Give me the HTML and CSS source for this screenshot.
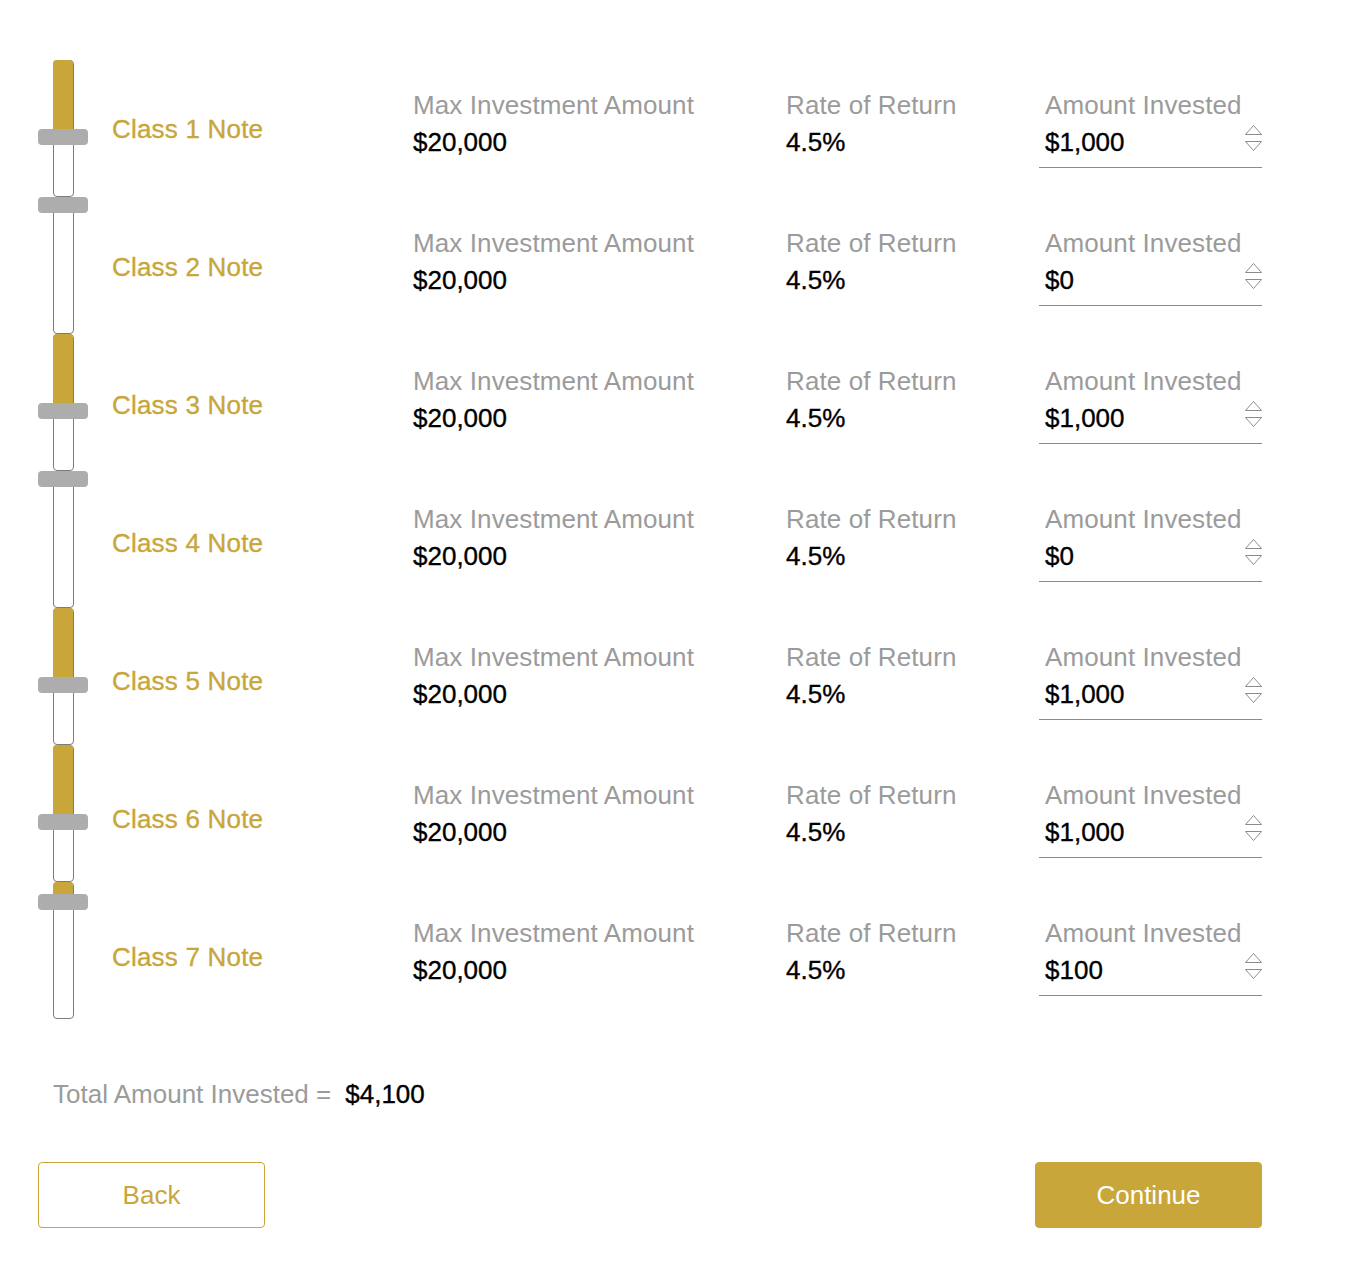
FILE: index.html
```html
<!DOCTYPE html>
<html>
<head>
<meta charset="utf-8">
<link rel="stylesheet" href="styles.css">
</head>
<body>
<div class="page">
  <div class="main">
    <div class="sliders">
      <div class="slider"><div class="track"></div><div class="fill" style="height:77px"></div><div class="thumb" style="top:69px"></div></div>
      <div class="slider"><div class="track"></div><div class="thumb" style="top:0px"></div></div>
      <div class="slider"><div class="track"></div><div class="fill" style="height:77px"></div><div class="thumb" style="top:69px"></div></div>
      <div class="slider"><div class="track"></div><div class="thumb" style="top:0px"></div></div>
      <div class="slider"><div class="track"></div><div class="fill" style="height:77px"></div><div class="thumb" style="top:69px"></div></div>
      <div class="slider"><div class="track"></div><div class="fill" style="height:77px"></div><div class="thumb" style="top:69px"></div></div>
      <div class="slider"><div class="track"></div><div class="fill" style="height:20px"></div><div class="thumb" style="top:12px"></div></div>
    </div>
    <div class="rows">
      <div class="row">
        <div class="name">Class 1 Note</div>
        <div class="col max"><div class="head">Max Investment Amount</div><div class="val">$20,000</div></div>
        <div class="col rate"><div class="head">Rate of Return</div><div class="val">4.5%</div></div>
        <div class="col amount"><div class="head">Amount Invested</div><div class="val input"><span>$1,000</span><svg class="spin" width="17" height="26" viewBox="0 0 17 26"><path d="M8.5 0.5 L0.5 9.5 L16.5 9.5 Z M0.5 16.5 L16.5 16.5 L8.5 25.5 Z" fill="none" stroke="#8c8c8c" stroke-width="1"/></svg></div></div>
      </div>
      <div class="row">
        <div class="name">Class 2 Note</div>
        <div class="col max"><div class="head">Max Investment Amount</div><div class="val">$20,000</div></div>
        <div class="col rate"><div class="head">Rate of Return</div><div class="val">4.5%</div></div>
        <div class="col amount"><div class="head">Amount Invested</div><div class="val input"><span>$0</span><svg class="spin" width="17" height="26" viewBox="0 0 17 26"><path d="M8.5 0.5 L0.5 9.5 L16.5 9.5 Z M0.5 16.5 L16.5 16.5 L8.5 25.5 Z" fill="none" stroke="#8c8c8c" stroke-width="1"/></svg></div></div>
      </div>
      <div class="row">
        <div class="name">Class 3 Note</div>
        <div class="col max"><div class="head">Max Investment Amount</div><div class="val">$20,000</div></div>
        <div class="col rate"><div class="head">Rate of Return</div><div class="val">4.5%</div></div>
        <div class="col amount"><div class="head">Amount Invested</div><div class="val input"><span>$1,000</span><svg class="spin" width="17" height="26" viewBox="0 0 17 26"><path d="M8.5 0.5 L0.5 9.5 L16.5 9.5 Z M0.5 16.5 L16.5 16.5 L8.5 25.5 Z" fill="none" stroke="#8c8c8c" stroke-width="1"/></svg></div></div>
      </div>
      <div class="row">
        <div class="name">Class 4 Note</div>
        <div class="col max"><div class="head">Max Investment Amount</div><div class="val">$20,000</div></div>
        <div class="col rate"><div class="head">Rate of Return</div><div class="val">4.5%</div></div>
        <div class="col amount"><div class="head">Amount Invested</div><div class="val input"><span>$0</span><svg class="spin" width="17" height="26" viewBox="0 0 17 26"><path d="M8.5 0.5 L0.5 9.5 L16.5 9.5 Z M0.5 16.5 L16.5 16.5 L8.5 25.5 Z" fill="none" stroke="#8c8c8c" stroke-width="1"/></svg></div></div>
      </div>
      <div class="row">
        <div class="name">Class 5 Note</div>
        <div class="col max"><div class="head">Max Investment Amount</div><div class="val">$20,000</div></div>
        <div class="col rate"><div class="head">Rate of Return</div><div class="val">4.5%</div></div>
        <div class="col amount"><div class="head">Amount Invested</div><div class="val input"><span>$1,000</span><svg class="spin" width="17" height="26" viewBox="0 0 17 26"><path d="M8.5 0.5 L0.5 9.5 L16.5 9.5 Z M0.5 16.5 L16.5 16.5 L8.5 25.5 Z" fill="none" stroke="#8c8c8c" stroke-width="1"/></svg></div></div>
      </div>
      <div class="row">
        <div class="name">Class 6 Note</div>
        <div class="col max"><div class="head">Max Investment Amount</div><div class="val">$20,000</div></div>
        <div class="col rate"><div class="head">Rate of Return</div><div class="val">4.5%</div></div>
        <div class="col amount"><div class="head">Amount Invested</div><div class="val input"><span>$1,000</span><svg class="spin" width="17" height="26" viewBox="0 0 17 26"><path d="M8.5 0.5 L0.5 9.5 L16.5 9.5 Z M0.5 16.5 L16.5 16.5 L8.5 25.5 Z" fill="none" stroke="#8c8c8c" stroke-width="1"/></svg></div></div>
      </div>
      <div class="row">
        <div class="name">Class 7 Note</div>
        <div class="col max"><div class="head">Max Investment Amount</div><div class="val">$20,000</div></div>
        <div class="col rate"><div class="head">Rate of Return</div><div class="val">4.5%</div></div>
        <div class="col amount"><div class="head">Amount Invested</div><div class="val input"><span>$100</span><svg class="spin" width="17" height="26" viewBox="0 0 17 26"><path d="M8.5 0.5 L0.5 9.5 L16.5 9.5 Z M0.5 16.5 L16.5 16.5 L8.5 25.5 Z" fill="none" stroke="#8c8c8c" stroke-width="1"/></svg></div></div>
      </div>
    </div>
  </div>
  <div class="total"><span class="total-label">Total Amount Invested =</span><span class="total-val">$4,100</span></div>
  <div class="actions">
    <button class="btn back">Back</button>
    <button class="btn continue">Continue</button>
  </div>
</div>
</body>
</html>
```

FILE: styles.css
```css
* { box-sizing: border-box; }
html, body { margin: 0; padding: 0; background: #fff; }
body {
  font-family: "Liberation Sans", Arial, Helvetica, sans-serif;
  font-size: 26px;
  color: #000;
}
.page {
  padding: 60px 0 0 38px;
  width: 1262px;
}
.main {
  display: flex;
  align-items: flex-start;
}
.sliders {
  width: 50px;
  display: flex;
  flex-direction: column;
}
.slider {
  position: relative;
  height: 137px;
  width: 50px;
}
.track {
  margin-left: 15px;
  width: 21px;
  height: 100%;
  border: 1px solid #7c7c7c;
  border-radius: 4px;
  background: #fff;
}
.fill {
  position: absolute;
  left: 15px;
  top: 0;
  width: 20px;
  background: #c8a63a;
  border-radius: 4px 4px 0 0;
}
.thumb {
  position: absolute;
  left: 0;
  width: 50px;
  height: 16px;
  background: #adadad;
  border-radius: 4px;
}
.rows {
  margin-left: 24px;
  display: flex;
  flex-direction: column;
}
.row {
  display: flex;
  height: 138px;
}
.name {
  width: 301px;
  align-self: center;
  line-height: 30px;
  color: #c8a63a;
  letter-spacing: 0.2px;
  -webkit-text-stroke: 0.35px #c8a63a;
}
.col {
  padding-top: 30px;
}
.max { width: 373px; }
.rate { width: 253px; }
.amount { width: 223px; }
.head {
  line-height: 30px;
  color: #9b9b9b;
  white-space: nowrap;
  letter-spacing: 0.1px;
}
.val {
  margin-top: 7px;
  line-height: 30px;
  white-space: nowrap;
  -webkit-text-stroke: 0.35px #000;
}
.amount .head { padding-left: 6px; }
.input {
  display: flex;
  justify-content: space-between;
  align-items: flex-start;
  padding: 0 0 10px 6px;
  border-bottom: 1px solid #8a8a8a;
  -webkit-text-stroke: 0;
}
.input span { -webkit-text-stroke: 0.35px #000; }
.spin { display: block; margin-top: -2px; }
.total {
  margin-top: 53px;
  padding-left: 15px;
  line-height: 30px;
  display: flex;
  gap: 14px;
}
.total-label { color: #9b9b9b; }
.total-val { color: #000; -webkit-text-stroke: 0.35px #000; }
.actions {
  margin-top: 53px;
  display: flex;
  justify-content: space-between;
}
.btn {
  width: 227px;
  height: 66px;
  font-family: "Liberation Sans", Arial, Helvetica, sans-serif;
  font-size: 26px;
  border-radius: 4px;
  cursor: pointer;
  padding: 0;
}
.back {
  background: #fff;
  border: 1px solid #c8a63a;
  color: #c8a63a;
}
.continue {
  background: #c8a63a;
  border: 1px solid #c8a63a;
  color: #fff;
}
```
